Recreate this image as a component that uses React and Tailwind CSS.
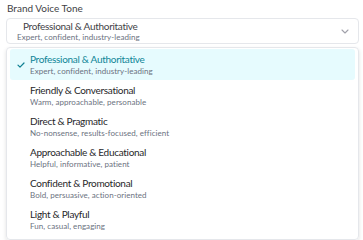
import React from "react";

const options = [
  ["Professional & Authoritative", "Expert, confident, industry-leading"],
  ["Friendly & Conversational", "Warm, approachable, personable"],
  ["Direct & Pragmatic", "No-nonsense, results-focused, efficient"],
  ["Approachable & Educational", "Helpful, informative, patient"],
  ["Confident & Promotional", "Bold, persuasive, action-oriented"],
  ["Light & Playful", "Fun, casual, engaging"],
];

export default function App() {
  return (
    <div className="w-[363px] h-[240px] bg-white overflow-hidden font-['Lato',sans-serif] pl-[6px] pr-[4px] pt-[1px]">
      <div className="text-[10px] leading-[14px] text-[#3f3f46] pl-[1px]">Brand Voice Tone</div>
      <div className="mt-[3px] h-[26px] border border-[#e5e7eb] rounded-[4px] flex items-center pl-[10px] pr-[9px]">
        <div className="flex-1 flex flex-col">
          <span className="text-[10px] tracking-[-0.3px] leading-[12px] text-[#3f3f46] pl-[6px]">Professional &amp; Authoritative</span>
          <span className="text-[8px] tracking-[0.05px] leading-[11px] text-[#6b7280]">Expert, confident, industry-leading</span>
        </div>
        <svg width="8" height="5" viewBox="0 0 8 5" fill="none" className="text-[#a1a1aa]">
          <path d="M1 1l3 3L7 1" stroke="currentColor" strokeWidth="1.1" strokeLinecap="round" strokeLinejoin="round" />
        </svg>
      </div>
      <div className="mt-[3px] border border-[#e5e7eb] rounded-[4px] shadow-[0_2px_4px_rgba(0,0,0,0.12)] pt-[1px] px-[3px] pb-[4px]">
        {options.map(([t, s], i) => (
          <div
            key={t}
            className={
              "h-[31px] flex items-center rounded-[3px] " +
              (i === 0 ? "bg-[#e6fbfe]" : "")
            }
          >
            <div className="w-[20px] flex justify-center pl-[2px]">
              {i === 0 && (
                <svg width="8" height="6" viewBox="0 0 8 6" fill="none">
                  <path d="M1 3.2l2 2L7 1" stroke="#0e7f92" strokeWidth="1.2" strokeLinecap="round" strokeLinejoin="round" />
                </svg>
              )}
            </div>
            <div className="flex flex-col">
              <span className={"text-[10px] tracking-[-0.3px] leading-[13px] " + (i === 0 ? "text-[#0e8597]" : "text-[#27272a]")}>{t}</span>
              <span className="text-[8px] tracking-[0.05px] leading-[11px] text-[#6b7280]">{s}</span>
            </div>
          </div>
        ))}
      </div>
    </div>
  );
}
